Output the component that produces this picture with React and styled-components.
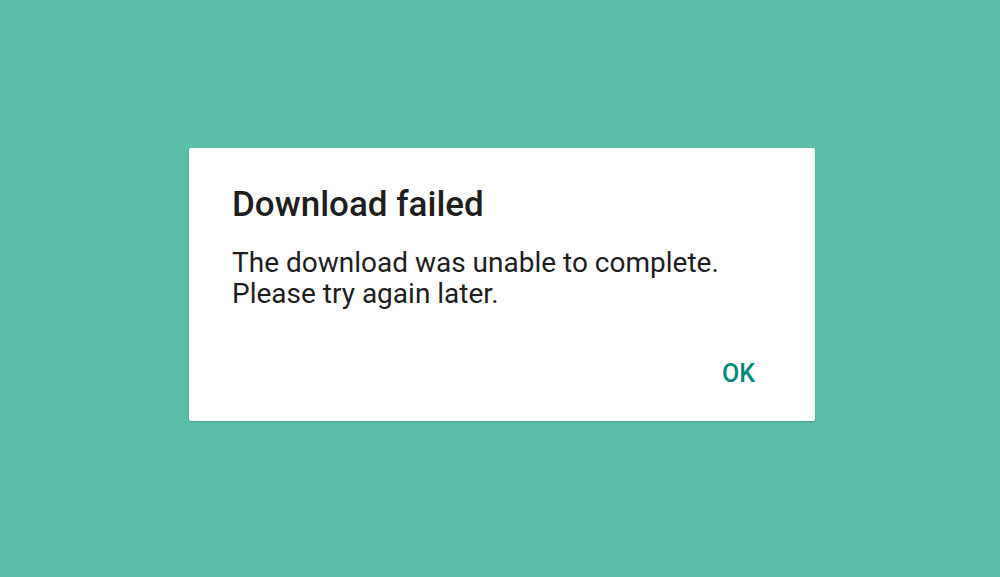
import React from 'react';
import styled, { createGlobalStyle } from 'styled-components';

const GlobalStyle = createGlobalStyle`
  html, body {
    margin: 0;
    padding: 0;
  }
  body {
    font-family: Roboto, "Noto Sans", Arial, sans-serif;
    background: #5bbea8;
  }
`;

function App() {
  return (
    <Page>
      <GlobalStyle />
      <Dialog>
        <Title>Download failed</Title>
        <Message>
          The download was unable to complete.
          <br />
          Please try again later.
        </Message>
        <Actions>
          <OkButton>OK</OkButton>
        </Actions>
      </Dialog>
    </Page>
  );
}

export default App;

const Page = styled.div`
  width: 1000px;
  height: 577px;
  box-sizing: border-box;
  padding: 148px 0 0 189px;
  background: #5bbea8;
`;

const Dialog = styled.div`
  width: 626px;
  height: 273px;
  box-sizing: border-box;
  padding: 0 43px;
  background: #ffffff;
  border-radius: 2px;
  box-shadow: 0 1px 2px rgba(0, 0, 0, 0.18);
  display: flex;
  flex-direction: column;
`;

const Title = styled.h2`
  margin: 37px 0 0;
  font-size: 35px;
  font-weight: 500;
  line-height: 40px;
  color: #1e1e1e;
`;

const Message = styled.p`
  margin: 22px 0 0;
  font-size: 28px;
  font-weight: 400;
  line-height: 31px;
  color: #1e1e1e;
`;

const Actions = styled.div`
  display: flex;
  justify-content: flex-end;
  margin-top: auto;
  padding: 0 17px 32px 0;
`;

const OkButton = styled.button`
  border: none;
  background: none;
  padding: 0;
  font-family: Roboto, sans-serif;
  font-size: 25px;
  font-weight: 500;
  color: #00897b;
  line-height: 30px;
`;
